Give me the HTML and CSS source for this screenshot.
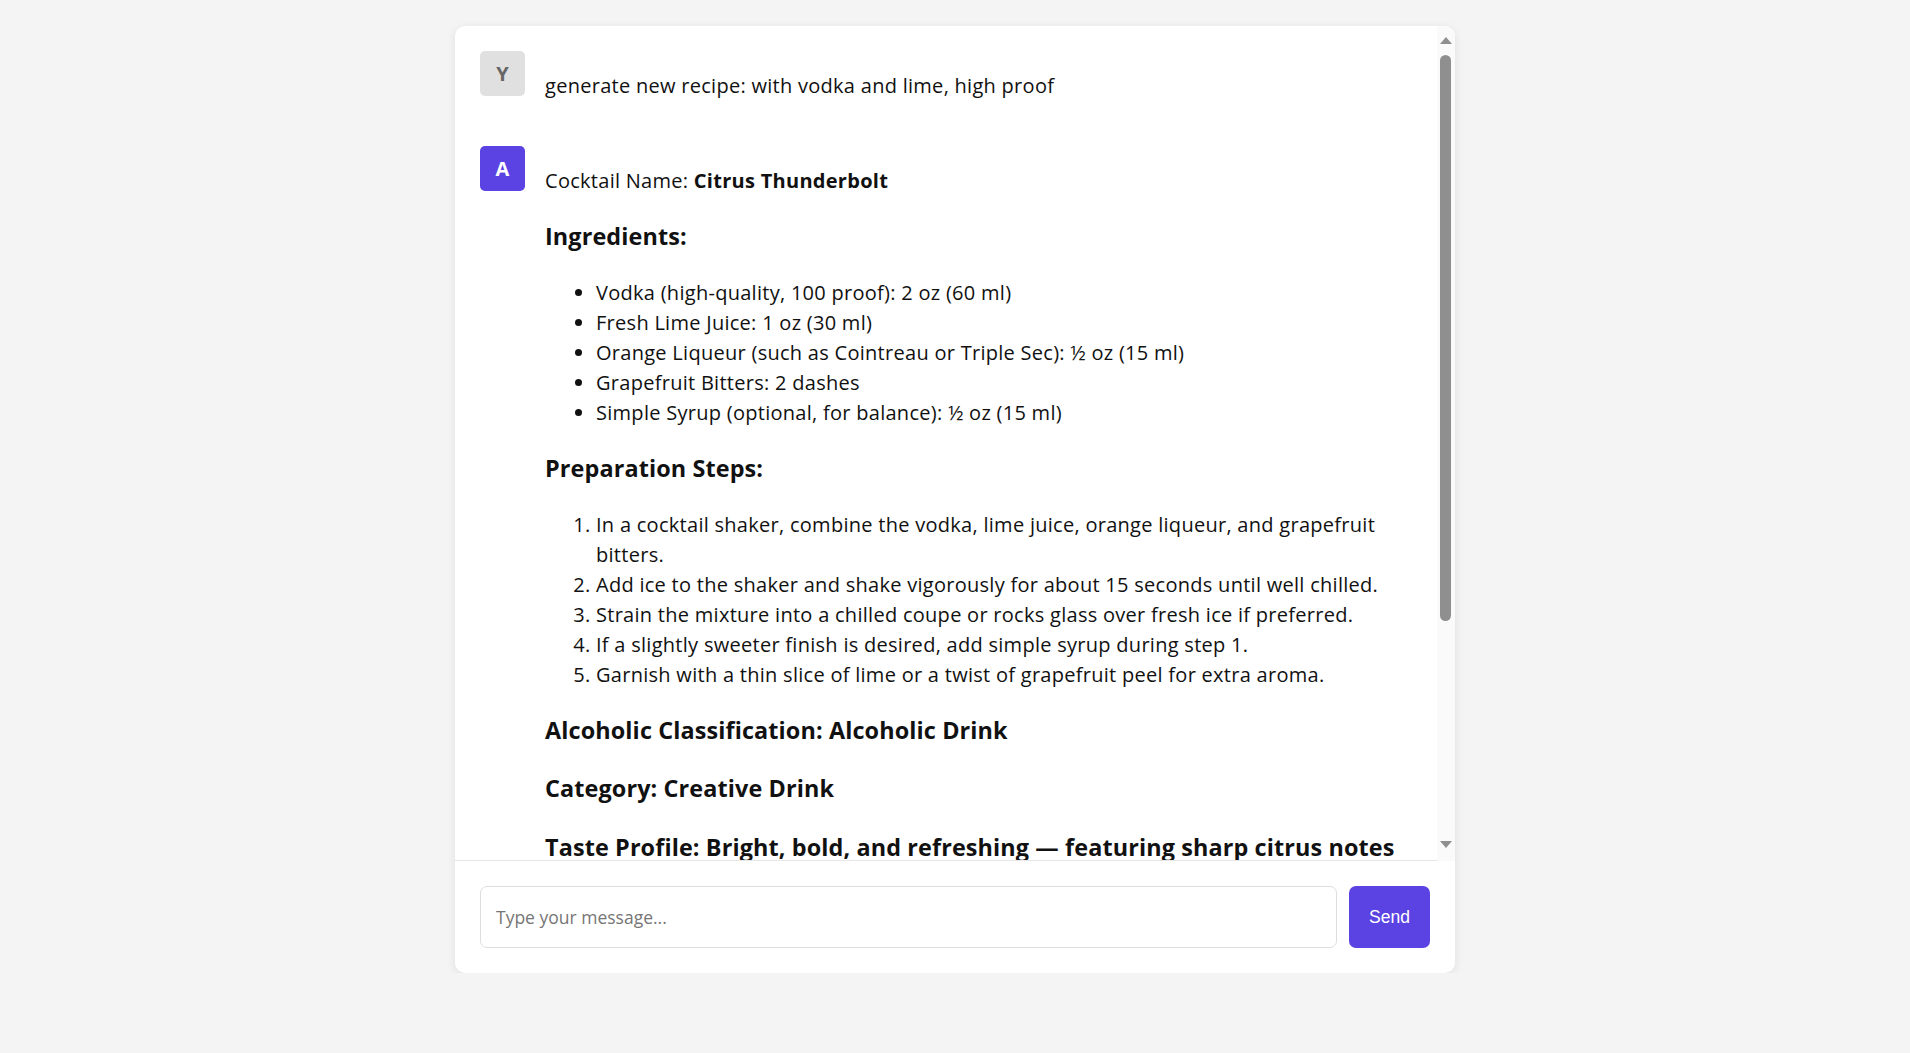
FILE: index.html
```html
<!DOCTYPE html>
<html lang="en">
<head>
<meta charset="utf-8">
<title>Cocktail Chat</title>
<link rel="stylesheet" href="styles.css">
</head>
<body>
<div class="card">
  <div class="messages">
    <div class="msg">
      <div class="avatar user">Y</div>
      <div class="content">
        <p>generate new recipe: with vodka and lime, high proof</p>
      </div>
    </div>
    <div class="msg">
      <div class="avatar bot">A</div>
      <div class="content">
        <p>Cocktail Name: <strong>Citrus Thunderbolt</strong></p>
        <h3>Ingredients:</h3>
        <ul>
          <li>Vodka (high-quality, 100 proof): 2 oz (60 ml)</li>
          <li>Fresh Lime Juice: 1 oz (30 ml)</li>
          <li>Orange Liqueur (such as Cointreau or Triple Sec): ½ oz (15 ml)</li>
          <li>Grapefruit Bitters: 2 dashes</li>
          <li>Simple Syrup (optional, for balance): ½ oz (15 ml)</li>
        </ul>
        <h3>Preparation Steps:</h3>
        <ol>
          <li>In a cocktail shaker, combine the vodka, lime juice, orange liqueur, and grapefruit<br>bitters.</li>
          <li>Add ice to the shaker and shake vigorously for about 15 seconds until well chilled.</li>
          <li>Strain the mixture into a chilled coupe or rocks glass over fresh ice if preferred.</li>
          <li>If a slightly sweeter finish is desired, add simple syrup during step 1.</li>
          <li>Garnish with a thin slice of lime or a twist of grapefruit peel for extra aroma.</li>
        </ol>
        <h3>Alcoholic Classification: Alcoholic Drink</h3>
        <h3>Category: Creative Drink</h3>
        <h3 class="nowrap">Taste Profile: Bright, bold, and refreshing — featuring sharp citrus notes</h3>
      </div>
    </div>
  </div>
  <div class="scrollbar">
    <svg class="arrow up" width="12" height="7" viewBox="0 0 12 7"><polygon points="0,7 12,7 6,0" fill="#8f8f8f"/></svg>
    <div class="thumb"></div>
    <svg class="arrow down" width="12" height="7" viewBox="0 0 12 7"><polygon points="0,0 12,0 6,7" fill="#8f8f8f"/></svg>
  </div>
  <div class="composer">
    <input class="field" type="text" placeholder="Type your message...">
    <button class="send">Send</button>
  </div>
</div>
</body>
</html>
```

FILE: styles.css
```css
html, body {
  margin: 0;
  padding: 0;
}
body {
  background: #f4f4f4;
  font-family: "Segoe UI", "Open Sans", "Noto Sans", sans-serif;
  color: #111;
  font-size: 20px;
  line-height: 1.5;
}
.card {
  position: relative;
  width: 1000px;
  height: 947px;
  margin: 26px auto 0;
  background: #fff;
  border-radius: 10px;
  box-shadow: 0 2px 10px rgba(0, 0, 0, 0.09);
  display: flex;
  flex-direction: column;
  overflow: hidden;
}
.messages {
  flex: 1;
  overflow: hidden;
  padding: 25px 43px 0 25px;
}
.msg {
  display: flex;
  gap: 20px;
  margin-bottom: 25px;
}
.avatar {
  flex: none;
  width: 45px;
  height: 45px;
  border-radius: 5px;
  display: flex;
  align-items: center;
  justify-content: center;
  font-weight: 700;
  font-size: 20px;
}
.avatar.user {
  background: #e0e0e0;
  color: #666;
}
.avatar.bot {
  background: #5b43e3;
  color: #fff;
}
.content {
  flex: 1;
  min-width: 0;
  letter-spacing: 0.28px;
}
.content p {
  margin: 20px 0;
}
.content h3 {
  font-size: 1.17em;
  font-weight: 700;
  margin: 23.4px 0;
  line-height: 35px;
  letter-spacing: 0.12px;
}
.content h3.nowrap {
  white-space: nowrap;
}
.content ul,
.content ol {
  margin: 20px 0;
  padding-left: 51px;
}
.scrollbar {
  position: absolute;
  top: 0;
  right: 0;
  width: 18px;
  height: 835px;
  background: #fafafa;
}
.arrow {
  position: absolute;
  left: 3px;
}
.arrow.up {
  top: 11px;
}
.arrow.down {
  top: 815px;
}
.thumb {
  position: absolute;
  left: 3px;
  top: 29px;
  width: 11px;
  height: 566px;
  border-radius: 6px;
  background: #8f8f8f;
}
.composer {
  flex: none;
  border-top: 1px solid #e6e6e6;
  padding: 25px;
  display: flex;
  gap: 12px;
}
.field {
  flex: 1;
  height: 62px;
  box-sizing: border-box;
  border: 1px solid #dddddd;
  border-radius: 7px;
  padding: 0 15px;
  font-family: "Segoe UI", "Open Sans", "Noto Sans", sans-serif;
  font-size: 17.5px;
  color: #111;
  outline: none;
}
.field::placeholder {
  color: #767676;
}
.send {
  flex: none;
  width: 81px;
  height: 62px;
  border: none;
  border-radius: 7px;
  background: #5b43e3;
  color: #fff;
  font-family: "Liberation Sans", Arial, sans-serif;
  font-size: 17.5px;
}
```
